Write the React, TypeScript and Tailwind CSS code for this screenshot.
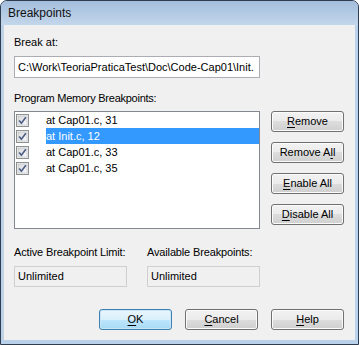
import React from 'react';

const rows = [
  { label: 'at Cap01.c, 31', selected: false },
  { label: 'at Init.c, 12', selected: true },
  { label: 'at Cap01.c, 33', selected: false },
  { label: 'at Cap01.c, 35', selected: false },
];

const CheckBox: React.FC = () => (
  <svg width="13" height="13" viewBox="0 0 13 13" className="shrink-0">
    <defs>
      <linearGradient id="cbfill" x1="0" y1="0" x2="1" y2="1">
        <stop offset="0" stopColor="#d9d9d9" />
        <stop offset="1" stopColor="#fafafa" />
      </linearGradient>
    </defs>
    <rect x="0.5" y="0.5" width="12" height="12" fill="#f4f4f4" stroke="#8e8f8f" />
    <rect x="2" y="2" width="9" height="9" fill="url(#cbfill)" stroke="#b8bcc2" strokeWidth="0.6" />
    <path d="M3.2 6.4 L5.4 9.2 L9.8 3.2" fill="none" stroke="#4a5d87" strokeWidth="1.6" />
  </svg>
);

const Btn: React.FC<{ children: React.ReactNode; primary?: boolean }> = ({ children, primary }) => (
  <button
    className={`flex h-[21px] w-[73px] items-center justify-center rounded-[3px] border text-[11px] leading-none ${
      primary
        ? 'border-[#3c7fb1] bg-[linear-gradient(#eaf6fd_0%,#d9f0fc_50%,#bee6fd_50%,#a7d9f5_100%)] shadow-[inset_0_0_0_1px_#c8e6f8]'
        : 'border-[#707070] bg-[linear-gradient(#f2f2f2_0%,#ebebeb_50%,#dddddd_50%,#cfcfcf_100%)] shadow-[inset_0_0_0_1px_#fbfbfb]'
    }`}
  >
    {children}
  </button>
);

const U: React.FC<{ children: React.ReactNode }> = ({ children }) => <span className="underline underline-offset-[2px]">{children}</span>;

export default function App() {
  return (
    <div className="h-[345px] w-[359px] bg-white font-['Liberation_Sans',Arial,sans-serif] text-[11px] text-black">
      <div className="flex h-full flex-col rounded-t-[7px] border border-[#2f3d4f] bg-[#b9d1ea]">
        <div className="flex h-[24px] items-center rounded-t-[6px] bg-[linear-gradient(#a3bedc,#c3d6eb)] pl-[7px] text-[12px] text-[#111]">
          Breakpoints
        </div>
        <div className="mb-[4px] ml-[2px] mr-[3px] flex-1 border-l border-[#c9d2dc] bg-[#f0f0f0] pl-[10px] pt-[11px]">
          <div className="h-[13px] leading-[13px]">Break at:</div>
          <div className="mt-[7px] flex h-[22px] w-[246px] items-center overflow-hidden whitespace-nowrap border border-[#abadb3] bg-white pl-[3px]">
            C:\Work\TeoriaPraticaTest\Doc\Code-Cap01\Init.
          </div>
          <div className="mt-[14px] h-[13px] leading-[13px] tracking-[-0.25px]">Program Memory Breakpoints:</div>
          <div className="mt-[6px] flex">
            <div className="h-[118px] w-[246px] border border-[#828790] bg-white">
              {rows.map((r) => (
                <div key={r.label} className="flex h-[16px] items-center">
                  <div className="ml-[1px] mr-[17px] flex">
                    <CheckBox />
                  </div>
                  <div className={`flex h-full flex-1 items-center ${r.selected ? 'bg-[#3399ff] text-white' : ''}`}>
                    {r.label}
                  </div>
                </div>
              ))}
            </div>
            <div className="ml-[11px] flex flex-col gap-[10px]">
              <Btn>
                <U>R</U>emove
              </Btn>
              <Btn>
                Remove A<U>l</U>l
              </Btn>
              <Btn>
                <U>E</U>nable All
              </Btn>
              <Btn>
                <U>D</U>isable All
              </Btn>
            </div>
          </div>
          <div className="mt-[17px] flex gap-[20px]">
            <div className="flex flex-col">
              <div className="h-[13px] leading-[13px] tracking-[-0.15px]">Active Breakpoint Limit:</div>
              <div className="mt-[7px] flex h-[21px] w-[113px] items-center border border-[#cfcfcf] pl-[3px]">Unlimited</div>
            </div>
            <div className="flex flex-col">
              <div className="h-[13px] leading-[13px] tracking-[-0.15px]">Available Breakpoints:</div>
              <div className="mt-[7px] flex h-[21px] w-[113px] items-center border border-[#cfcfcf] pl-[3px]">Unlimited</div>
            </div>
          </div>
          <div className="mt-[22px] flex gap-[13px] pl-[85px]">
            <Btn primary>
              <U>O</U>K
            </Btn>
            <Btn>
              <U>C</U>ancel
            </Btn>
            <Btn>
              <U>H</U>elp
            </Btn>
          </div>
        </div>
      </div>
    </div>
  );
}
